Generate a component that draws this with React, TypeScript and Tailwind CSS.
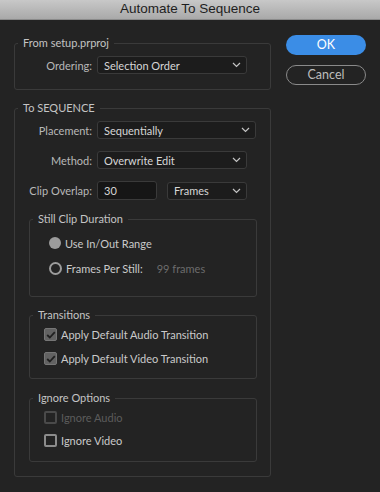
import React from "react";

const font = { fontFamily: "Lato, 'Open Sans', sans-serif" };

function Chevron() {
  return (
    <svg width="9" height="6" viewBox="0 0 9 6" className="shrink-0">
      <path d="M1 1 L4.5 4.5 L8 1" fill="none" stroke="#c4c4c4" strokeWidth="1.2" />
    </svg>
  );
}

function Select({ value, w }: { value: string; w: string }) {
  return (
    <div className={`${w} h-[18px] flex items-center justify-between rounded-[3px] border border-[#3a3a3a] bg-[#1c1c1c] pl-[6px] pr-[5px] text-[#d6d6d6]`}>
      <span className="leading-none">{value}</span>
      <Chevron />
    </div>
  );
}

function Group({ label, className, children }: { label: string; className?: string; children: React.ReactNode }) {
  return (
    <fieldset className={`border border-[#3a3a3a] rounded-[3px] ${className ?? ""}`}>
      <legend className="ml-[3px] px-[5px] h-[16px] leading-[16px] text-[#c4c4c4]">{label}</legend>
      {children}
    </fieldset>
  );
}

function Row({ label, children }: { label: string; children: React.ReactNode }) {
  return (
    <div className="flex items-center gap-[5px]">
      <div className="w-[77px] text-right text-[#b8b8b8] leading-none">{label}</div>
      {children}
    </div>
  );
}

function Check({ checked, disabled, label }: { checked?: boolean; disabled?: boolean; label: string }) {
  return (
    <div className="flex items-center gap-[4px] h-[13px]">
      {checked ? (
        <div className="w-[13px] h-[13px] rounded-[2px] bg-[#626262] border border-[#767676] flex items-center justify-center">
          <svg width="10" height="8" viewBox="0 0 10 8">
            <path d="M1.2 4 L3.8 6.5 L8.8 1.2" fill="none" stroke="#1f1f1f" strokeWidth="1.8" />
          </svg>
        </div>
      ) : (
        <div className={`w-[13px] h-[13px] rounded-[2px] border-2 ${disabled ? "border-[#4a4a4a]" : "border-[#8c8c8c]"}`} />
      )}
      <span className={`leading-none ${disabled ? "text-[#5c5c5c]" : "text-[#cacaca]"}`}>{label}</span>
    </div>
  );
}

export default function App() {
  return (
    <div className="w-[380px] h-[492px] bg-[#232323] text-[11px] overflow-hidden" style={font}>
      <div className="h-[20px] bg-gradient-to-b from-[#c8c8c8] to-[#a9a9a9] border-b border-[#8a8a8a] flex items-center justify-center text-[13.5px] text-[#1e1e1e]" style={{ fontFamily: "'Liberation Sans', sans-serif" }}>
        Automate To Sequence
      </div>
      <div className="flex pl-[14px]">
        <div className="w-[257px] flex flex-col">
          <Group label="From setup.prproj" className="mt-[15px] pt-[5px] pb-[15px]">
            <Row label="Ordering:">
              <Select value="Selection Order" w="w-[150px]" />
            </Row>
          </Group>
          <Group label="To SEQUENCE" className="mt-[10px] pt-[5px] pb-[14px]">
            <div className="flex flex-col gap-[12px]">
              <Row label="Placement:">
                <Select value="Sequentially" w="w-[159px]" />
              </Row>
              <Row label="Method:">
                <Select value="Overwrite Edit" w="w-[150px]" />
              </Row>
              <Row label="Clip Overlap:">
                <div className="w-[60px] h-[19px] flex items-center rounded-[3px] border border-[#3a3a3a] bg-[#161616] pl-[6px] text-[#d6d6d6] leading-none">30</div>
                <div className="ml-[5px]">
                  <Select value="Frames" w="w-[80px]" />
                </div>
              </Row>
            </div>
            <Group label="Still Clip Duration" className="mt-[11px] ml-[14px] w-[228px] pt-[10px] pb-[22px]">
              <div className="flex flex-col gap-[13px] pl-[19px]">
                <div className="flex items-center gap-[4px] h-[12px]">
                  <div className="w-[12px] h-[12px] rounded-full bg-[#9c9c9c]" />
                  <span className="text-[#cacaca] leading-none">Use In/Out Range</span>
                </div>
                <div className="flex items-center gap-[4px] h-[12px]">
                  <div className="w-[13px] h-[13px] rounded-full border-2 border-[#9c9c9c]" />
                  <span className="text-[#cacaca] leading-none">Frames Per Still:</span>
                  <span className="ml-[10px] text-[#6c6c6c] leading-none">99 frames</span>
                </div>
              </div>
            </Group>
            <Group label="Transitions" className="mt-[10px] ml-[14px] w-[228px] pt-[5px] pb-[13px]">
              <div className="flex flex-col gap-[11px] pl-[14px]">
                <Check checked label="Apply Default Audio Transition" />
                <Check checked label="Apply Default Video Transition" />
              </div>
            </Group>
            <Group label="Ignore Options" className="mt-[11px] ml-[14px] w-[228px] pt-[5px] pb-[14px]">
              <div className="flex flex-col gap-[10px] pl-[14px]">
                <Check disabled label="Ignore Audio" />
                <Check label="Ignore Video" />
              </div>
            </Group>
          </Group>
        </div>
        <div className="ml-[15px] mt-[15px] flex flex-col gap-[10px] w-[80px]">
          <div className="h-[20px] rounded-full bg-[#3b8de6] text-white text-[12.5px] flex items-center justify-center">OK</div>
          <div className="h-[20px] rounded-full border-[1.5px] border-[#8a8a8a] text-[#bdbdbd] text-[12.5px] flex items-center justify-center">Cancel</div>
        </div>
      </div>
    </div>
  );
}
